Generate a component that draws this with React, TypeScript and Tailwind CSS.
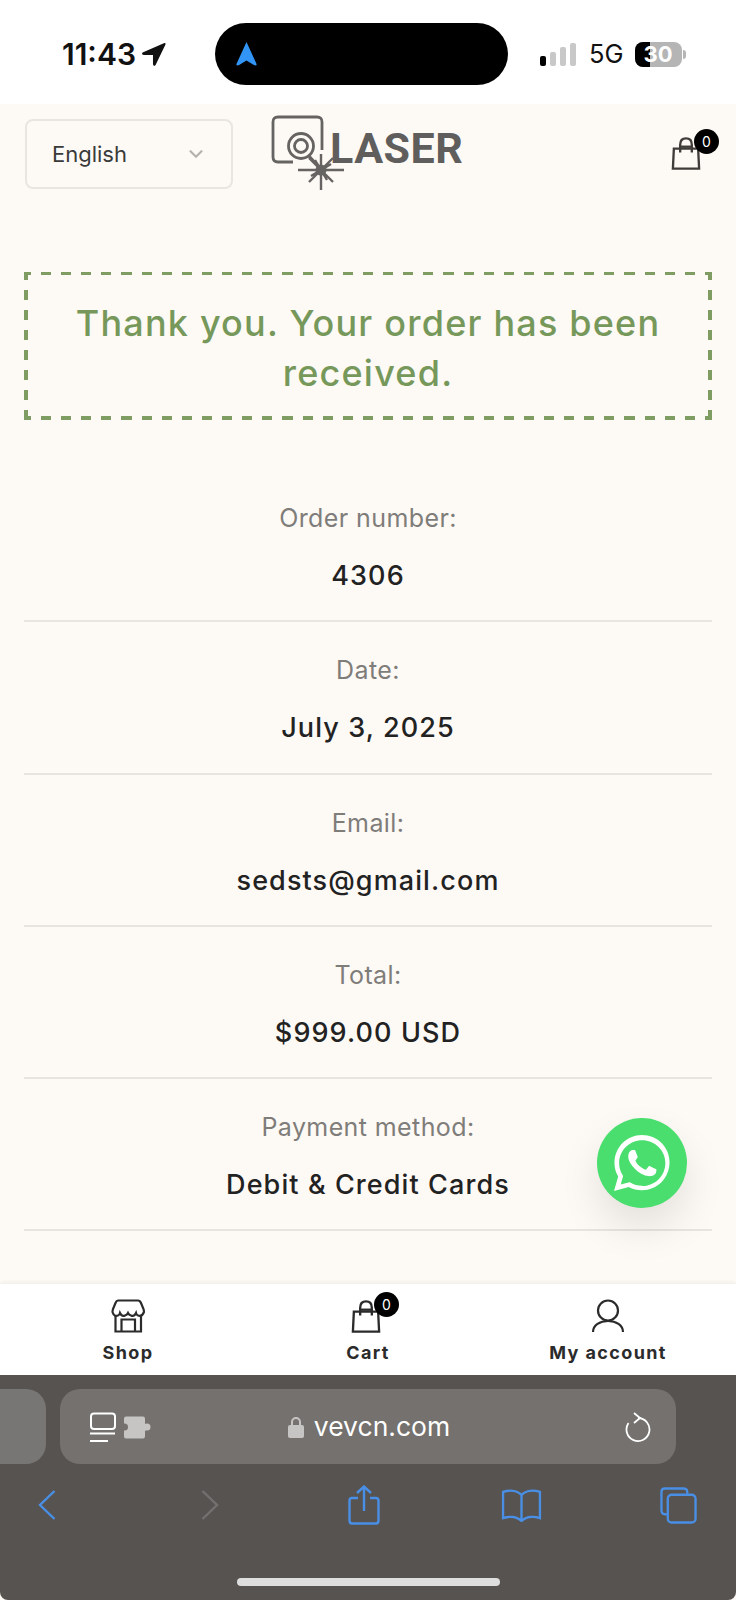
import React from "react";
import { ChevronDown } from "lucide-react";

const rows = [
  { label: "Order number:", value: "4306" },
  { label: "Date:", value: "July 3, 2025" },
  { label: "Email:", value: "sedsts@gmail.com" },
  { label: "Total:", value: "$999.00 USD" },
  { label: "Payment method:", value: "Debit & Credit Cards" },
];

const BagIcon = ({ className }: { className?: string }) => (
  <svg viewBox="0 0 30 34" fill="none" stroke="currentColor" strokeWidth="2.4" className={className}>
    <path d="M2.5 12 L1.5 32.5 H28.5 L27.5 12 H2.5 Z" />
    <path d="M9 16 V8 C9 3.5 11.5 1.5 15 1.5 C18.5 1.5 21 3.5 21 8 V16" />
    <path d="M9 10 H21" />
  </svg>
);

const Logo = () => (
  <svg viewBox="0 0 76 78" fill="none" stroke="#666462" className="h-[78px] w-[76px]">
    <path d="M52 36 V8 Q52 3 47 3 H8 Q3 3 3 8 V43 Q3 48 8 48 H23" strokeWidth="2.8" />
    <circle cx="31" cy="32" r="12.5" strokeWidth="2.8" />
    <circle cx="31" cy="32" r="6.5" strokeWidth="2.8" />
    <path d="M39 42 L50 54" strokeWidth="2.8" />
    <path d="M51 40 V76 M28 56 H74 M39 44 L63 68 M63 44 L39 68 M41 62 L61 50 M45 46 L57 66" strokeWidth="2.4" />
    <circle cx="51" cy="56" r="5.5" fill="#666462" strokeWidth="0" />
  </svg>
);

const Badge = () => (
  <span className="absolute -right-[18px] -top-[8px] flex h-[25px] w-[25px] items-center justify-center rounded-full bg-black text-[14px] text-white">
    0
  </span>
);

const StatusBar = () => (
  <div className="flex h-[104px] items-center bg-white pt-[4px]">
    <div className="flex w-[215px] items-center pl-[62px]">
      <span className="text-[30px] font-semibold leading-none text-[#111]">11:43</span>
      <svg viewBox="0 0 24 24" className="ml-[5px] h-[25px] w-[25px]" fill="#111">
        <path d="M22.5 1 L1.5 10 Q0 12 3 12.5 L11.5 12.5 V21 Q12 24 14 22 L23.5 2.5 Q24 0.5 22.5 1 Z" />
      </svg>
    </div>
    <div className="flex h-[62px] w-[293px] items-center rounded-[31px] bg-black pl-[21px]">
      <svg viewBox="0 0 22 26" className="h-[24px] w-[21px]" fill="#3295f5">
        <path d="M11 0 L22 24 Q22 26 19 25 L11 20 L3 25 Q0 26 0 24 Z" />
      </svg>
    </div>
    <div className="ml-[32px] flex items-end gap-[4px]">
      <span className="h-[10px] w-[6px] rounded-[2px] bg-black" />
      <span className="h-[14px] w-[6px] rounded-[2px] bg-[#c8c8c8]" />
      <span className="h-[19px] w-[6px] rounded-[2px] bg-[#c8c8c8]" />
      <span className="h-[23px] w-[6px] rounded-[2px] bg-[#c8c8c8]" />
    </div>
    <span className="ml-[13px] text-[25.5px] leading-none text-[#111]">5G</span>
    <div className="relative ml-[11px] flex h-[25px] w-[47px] items-center justify-center overflow-hidden rounded-[8px] bg-[#b5b5b5]">
      <span className="absolute left-0 top-0 h-full w-[15px] bg-black" />
      <span className="relative text-[22px] font-bold leading-none text-white">30</span>
    </div>
    <span className="ml-[1px] h-[9px] w-[3px] rounded-r-full bg-[#b5b5b5]" />
  </div>
);

const Header = () => (
  <div className="flex h-[100px] items-start px-[25px] pt-[15px]">
    <div className="flex h-[70px] w-[208px] items-center justify-between rounded-[8px] border-2 border-[#e9e5e0] pl-[25px] pr-[24px]">
      <span className="text-[22px] text-[#3a3a3a]">English</span>
      <ChevronDown className="h-[22px] w-[22px] text-[#b5b2ae]" strokeWidth={2.4} />
    </div>
    <div className="ml-[37px] mt-[-5px] flex items-start">
      <Logo />
      <span
        className="ml-[-16px] mt-[10px] text-[43px] font-bold leading-[48px] tracking-[0.5px] text-[#5f5e5c]"
        style={{ fontFamily: "Roboto, sans-serif" }}
      >
        LASER
      </span>
    </div>
    <div className="relative ml-auto mr-[10px] mt-[18px] text-[#3f3d3a]">
      <BagIcon className="h-[33px] w-[30px]" />
      <Badge />
    </div>
  </div>
);

const OrderRow = ({ label, value }: { label: string; value: string }) => (
  <div className="flex h-[152.3px] flex-col items-center border-b-2 border-[#e8e4df] pt-[30px]">
    <span className="text-[25px] leading-[36px] tracking-[0.4px] text-[#7f7d7a]">{label}</span>
    <span className="mt-[22px] text-[27px] font-medium leading-[36px] tracking-[1.1px] text-[#222]">{value}</span>
  </div>
);

const NavItem = ({ icon, label }: { icon: React.ReactNode; label: string }) => (
  <div className="flex w-[240px] flex-col items-center pt-[14px]">
    <div className="flex h-[36px] items-center justify-center text-[#2b2b2b]">{icon}</div>
    <span className="mt-[8px] text-[18px] font-bold leading-[22px] tracking-[1.4px] text-[#2b2b2b]">{label}</span>
  </div>
);

const BrowserBar = () => (
  <div className="h-[225px] rounded-b-[8px] bg-[#565350] text-[#4a8fe6]">
    <div className="flex gap-[14px] pt-[14px]">
      <div className="h-[75px] w-[46px] rounded-r-[20px] bg-[#787674]" />
      <div className="flex h-[75px] w-[616px] items-center rounded-[20px] bg-[#74716e] pl-[30px] pr-[25px] text-white">
        <svg viewBox="0 0 62 36" className="h-[36px] w-[62px]" fill="none">
          <rect x="1" y="4.5" width="24" height="15.5" rx="3" stroke="#fff" strokeWidth="2" />
          <path d="M0 24.5 H25 M0 32 H18" stroke="#fff" strokeWidth="2" />
          <path d="M36 7.5 Q34 7.5 34 9.5 V27.5 Q34 29.5 36 29.5 H53 Q55 29.5 55 27.5 V22 A4 4 0 0 0 55 15 V9.5 Q55 7.5 53 7.5 Z" fill="#c6c5c4" />
          <circle cx="34.5" cy="18" r="3.5" fill="#74716e" />
          <circle cx="57" cy="18" r="3.5" fill="#c6c5c4" />
        </svg>
        <div className="flex flex-1 items-center justify-center pr-[39px]">
          <svg viewBox="0 0 16 22" className="mr-[10px] h-[22px] w-[16px]" fill="none">
            <path d="M4 10 V6 A4 4 0 0 1 12 6 V10" stroke="#c6c5c4" strokeWidth="2" />
            <rect x="0" y="9" width="16" height="13" rx="2" fill="#c6c5c4" />
          </svg>
          <span className="text-[26.5px] leading-none">vevcn.com</span>
        </div>
        <svg viewBox="0 0 26 30" fill="none" stroke="currentColor" strokeWidth="1.8" className="h-[30px] w-[26px]">
          <path d="M13 6 A11.5 11.5 0 1 1 3.5 11" />
          <path d="M9 1 L15 6 L9 11" />
        </svg>
      </div>
    </div>
    <div className="flex items-center pl-[38px] pt-[21px]">
      <svg viewBox="0 0 18 30" fill="none" stroke="currentColor" strokeWidth="2.4" className="h-[30px] w-[18px]">
        <path d="M16.5 1 L2 15 L16.5 29" />
      </svg>
      <svg viewBox="0 0 18 30" fill="none" stroke="#737170" strokeWidth="2.4" className="ml-[145px] h-[30px] w-[18px]">
        <path d="M1.5 1 L16 15 L1.5 29" />
      </svg>
      <svg viewBox="0 0 32 40" fill="none" stroke="currentColor" strokeWidth="2.4" className="ml-[129px] h-[40px] w-[32px]">
        <path d="M10 13 H4 Q1.5 13 1.5 16 V35.5 Q1.5 38.5 4 38.5 H28 Q30.5 38.5 30.5 35.5 V16 Q30.5 13 28 13 H22" />
        <path d="M16 26 V1.5 M9 8 L16 1.5 L23 8" />
      </svg>
      <svg viewBox="0 0 42 34" fill="none" stroke="currentColor" strokeWidth="2.4" className="ml-[121px] h-[33px] w-[41px]">
        <path d="M21 6 C16 1 8 1 2 3 V30 C8 28 16 28 21 33 C26 28 34 28 40 30 V3 C34 1 26 1 21 6 Z M21 6 V33" />
      </svg>
      <svg viewBox="0 0 38 38" fill="none" stroke="currentColor" strokeWidth="2.4" className="ml-[118px] h-[37px] w-[37px]">
        <path d="M7 28 H5 Q1.5 28 1.5 24 V5 Q1.5 1.5 5 1.5 H24 Q28 1.5 28 5 V7" />
        <rect x="8" y="8" width="28.5" height="28.5" rx="4" />
      </svg>
    </div>
    <div className="mx-auto mt-[53px] h-[8px] w-[263px] rounded-full bg-[#dedede]" />
  </div>
);

export default function App() {
  return (
    <div
      className="relative flex h-[1600px] w-[736px] flex-col overflow-hidden bg-[#fdf9f5]"
      style={{ fontFamily: "Inter, 'Liberation Sans', sans-serif" }}
    >
      <StatusBar />
      <Header />

      <main className="flex-1 px-[24px]">
        {/* dashes are longer than a css dashed border gives */}
        <div className="mt-[68px] flex h-[148px] items-center justify-center px-[30px] pt-[3px] text-center text-[36px] font-medium leading-[50px] tracking-[1.2px] text-[#76985a] [background:repeating-linear-gradient(90deg,#7f9c63_0_7px,transparent_7px_17px,#7f9c63_17px_20.12px)_top/100%_3px_no-repeat,repeating-linear-gradient(90deg,#7f9c63_0_7px,transparent_7px_17px,#7f9c63_17px_20.12px)_bottom/100%_4px_no-repeat,repeating-linear-gradient(180deg,#7f9c63_0_8px,transparent_8px_18px,#7f9c63_18px_20px)_left/4px_100%_no-repeat,repeating-linear-gradient(180deg,#7f9c63_0_8px,transparent_8px_18px,#7f9c63_18px_20px)_right/4px_100%_no-repeat]">
          Thank you. Your order has been received.
        </div>
        <div className="mt-[50px]">
          {rows.map((row) => (
            <OrderRow key={row.label} label={row.label} value={row.value} />
          ))}
        </div>
      </main>

      <nav className="flex h-[91px] justify-between bg-white px-[8px] shadow-[0_-2px_4px_rgba(0,0,0,0.05)]">
        <NavItem
          label="Shop"
          icon={
            <svg viewBox="0 0 34 34" fill="none" stroke="currentColor" strokeWidth="2.2" className="h-[34px] w-[34px]">
              <path d="M7 1.5 H27 Q29 1.5 30 4 L32.5 10 Q33 12 33 13 Q31 18 27 16.5 Q25.5 16 25 14 Q23 18 20 16.5 Q18 16 17 14 Q16 16 14 16.5 Q11 18 9 14 Q8.5 16 7 16.5 Q3 18 1.5 13 Q1.5 12 2 10 L4.5 4 Q5.5 1.5 7 1.5 Z" />
              <path d="M4.5 17 V32.5 H30 V17 M10.5 32.5 V20.5 H24 V32.5" />
            </svg>
          }
        />
        <NavItem
          label="Cart"
          icon={
            <div className="relative -ml-[4px]">
              <BagIcon className="h-[33px] w-[30px]" />
              <Badge />
            </div>
          }
        />
        <NavItem
          label="My account"
          icon={
            <svg viewBox="0 0 34 34" fill="none" stroke="currentColor" strokeWidth="2.2" className="h-[34px] w-[34px]">
              <circle cx="17" cy="11.5" r="10" />
              <path d="M2 33 C2 26 9 22 17 22 C25 22 32 26 32 33" />
            </svg>
          }
        />
      </nav>

      <BrowserBar />

      {/* whatsapp button */}
      <div className="absolute left-[597px] top-[1118px] flex h-[90px] w-[90px] items-center justify-center rounded-full bg-[#4ade6e] shadow-[0_20px_40px_rgba(0,0,0,0.1)]">
        <svg viewBox="0 0 24 24" className="h-[56px] w-[56px]" fill="#fff">
          <path d="M17.5 14.4c-.3-.1-1.8-.9-2-1-.3-.1-.5-.1-.7.1-.2.3-.8 1-.9 1.2-.2.2-.3.2-.6.1-.3-.1-1.2-.5-2.4-1.5-.9-.8-1.5-1.8-1.6-2.1-.2-.3 0-.5.1-.6l.4-.5c.1-.2.2-.3.3-.5.1-.2 0-.4 0-.5-.1-.1-.7-1.6-.9-2.2-.2-.6-.5-.5-.7-.5h-.6c-.2 0-.5.1-.8.4-.3.3-1 1-1 2.5s1.1 2.9 1.2 3.1c.1.2 2.1 3.2 5.1 4.5.7.3 1.3.5 1.7.6.7.2 1.4.2 1.9.1.6-.1 1.8-.7 2-1.4.2-.7.2-1.3.2-1.4-.1-.1-.3-.2-.6-.3zM12 21.8c-1.8 0-3.5-.5-5-1.4l-.4-.2-3.7 1 1-3.6-.2-.4c-1-1.6-1.5-3.4-1.5-5.2 0-5.4 4.4-9.8 9.9-9.8 2.6 0 5.1 1 7 2.9 1.9 1.9 2.9 4.3 2.9 7 0 5.4-4.5 9.8-9.9 9.8zM20.5 3.5C18.2 1.2 15.2 0 12 0 5.5 0 .2 5.3.2 11.9c0 2.1.5 4.1 1.6 5.9L0 24l6.3-1.7c1.7.9 3.7 1.4 5.7 1.4 6.5 0 11.8-5.3 11.8-11.9 0-3.2-1.2-6.1-3.3-8.3z" />
        </svg>
      </div>
    </div>
  );
}
